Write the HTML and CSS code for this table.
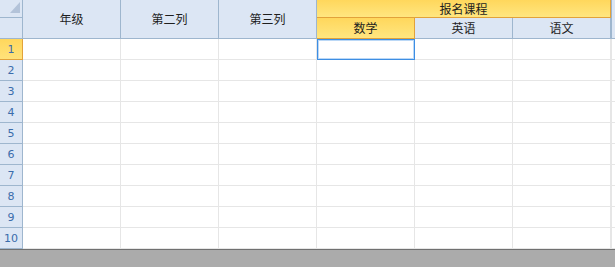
FILE: index.html
```html
<!DOCTYPE html>
<html lang="zh">
<head>
  <meta charset="UTF-8" />
  <meta name="viewport" content="width=device-width, initial-scale=1.0" />
  <title>报名表</title>
  <link rel="stylesheet" href="styles.css">
</head>
<body>
  <div class="sheet">
    <div class="corner corner-top"><span class="corner-mark"></span></div>
    <div class="col-head span-2">年级</div>
    <div class="col-head span-2">第二列</div>
    <div class="col-head span-2">第三列</div>
    <div class="col-head group">报名课程</div>
    <div class="col-head filler span-2"></div>

    <div class="corner"></div>
    <div class="col-head sub active">数学</div>
    <div class="col-head sub">英语</div>
    <div class="col-head sub">语文</div>

    <div class="row-head active">1</div>
    <div class="cell"></div><div class="cell"></div><div class="cell"></div>
    <div class="cell selected"></div><div class="cell"></div><div class="cell"></div>
    <div class="cell last"></div>

    <div class="row-head">2</div>
    <div class="cell"></div><div class="cell"></div><div class="cell"></div>
    <div class="cell"></div><div class="cell"></div><div class="cell"></div>
    <div class="cell last"></div>

    <div class="row-head">3</div>
    <div class="cell"></div><div class="cell"></div><div class="cell"></div>
    <div class="cell"></div><div class="cell"></div><div class="cell"></div>
    <div class="cell last"></div>

    <div class="row-head">4</div>
    <div class="cell"></div><div class="cell"></div><div class="cell"></div>
    <div class="cell"></div><div class="cell"></div><div class="cell"></div>
    <div class="cell last"></div>

    <div class="row-head">5</div>
    <div class="cell"></div><div class="cell"></div><div class="cell"></div>
    <div class="cell"></div><div class="cell"></div><div class="cell"></div>
    <div class="cell last"></div>

    <div class="row-head">6</div>
    <div class="cell"></div><div class="cell"></div><div class="cell"></div>
    <div class="cell"></div><div class="cell"></div><div class="cell"></div>
    <div class="cell last"></div>

    <div class="row-head">7</div>
    <div class="cell"></div><div class="cell"></div><div class="cell"></div>
    <div class="cell"></div><div class="cell"></div><div class="cell"></div>
    <div class="cell last"></div>

    <div class="row-head">8</div>
    <div class="cell"></div><div class="cell"></div><div class="cell"></div>
    <div class="cell"></div><div class="cell"></div><div class="cell"></div>
    <div class="cell last"></div>

    <div class="row-head">9</div>
    <div class="cell"></div><div class="cell"></div><div class="cell"></div>
    <div class="cell"></div><div class="cell"></div><div class="cell"></div>
    <div class="cell last"></div>

    <div class="row-head">10</div>
    <div class="cell"></div><div class="cell"></div><div class="cell"></div>
    <div class="cell"></div><div class="cell"></div><div class="cell"></div>
    <div class="cell last"></div>
  </div>
  <div class="status-bar"></div>
</body>
</html>
```

FILE: styles.css
```css
* {
  box-sizing: border-box;
}
body {
  margin: 0;
  background: #ffffff;
  font-family: "Noto Sans CJK SC", "DejaVu Sans", sans-serif;
  font-size: 12px;
  color: #1e1e1e;
  overflow: hidden;
}
.sheet {
  display: grid;
  grid-template-columns: 23px repeat(6, 98px) 1fr;
  grid-template-rows: 18px 21px repeat(10, 21px);
}

/* header area */
.corner {
  background: #dce6f4;
  border-right: 1px solid #9eb6ce;
  border-bottom: 1px solid #9eb6ce;
}
.corner-top {
  position: relative;
}
.corner-mark {
  position: absolute;
  right: 2px;
  top: 2px;
  width: 0;
  height: 0;
  border-left: 10px solid transparent;
  border-bottom: 11px solid #b3c3d9;
}
.col-head {
  display: flex;
  align-items: center;
  justify-content: center;
  background: #dce6f4;
  border-right: 1px solid #9eb6ce;
  border-bottom: 1px solid #9eb6ce;
  line-height: 1;
}
.span-2 {
  grid-row: span 2;
}
.col-head.group {
  grid-column: span 3;
  background: linear-gradient(#ffd75c, #ffe680);
  border-right-color: #e2a23a;
  border-bottom-color: #e2a23a;
}
.col-head.sub.active {
  background: linear-gradient(#ffd75c, #ffe680);
  border-right-color: #e2a23a;
  border-bottom-color: #e2a23a;
}
.col-head.filler {
  border-right: none;
  border-left: 1px solid #9eb6ce;
}

/* rows */
.row-head {
  display: flex;
  align-items: center;
  justify-content: center;
  background: #dce6f4;
  border-right: 1px solid #9eb6ce;
  border-bottom: 1px solid #9eb6ce;
  color: #3a6cab;
  font-family: "DejaVu Sans", sans-serif;
  font-size: 11px;
}
.row-head.active {
  background: linear-gradient(#ffd75c, #ffe27a);
  border-right-color: #e2a23a;
  border-bottom-color: #e2a23a;
}
.cell {
  border-right: 1px solid #e6e6e6;
  border-bottom: 1px solid #e6e6e6;
}
.cell.last {
  border-right: none;
  border-left: 1px solid #e6e6e6;
}
.cell.selected {
  border: 1px solid #3d8ee4;
  box-shadow: inset 0 0 0 1px rgba(61, 142, 228, 0.35);
}

.status-bar {
  height: 18px;
  background: #ababab;
  border-top: 1px solid #707070;
}
```
